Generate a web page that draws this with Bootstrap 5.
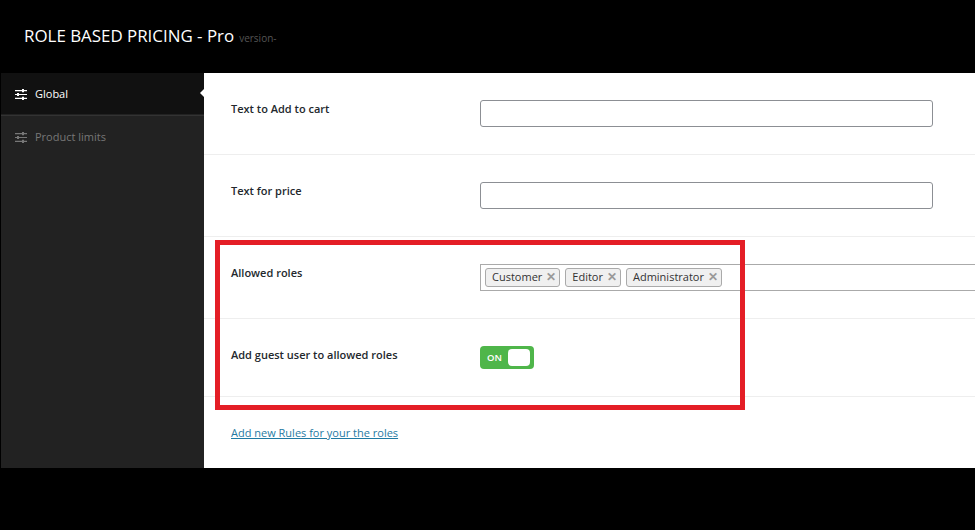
<!DOCTYPE html>
<html lang="en">
<head>
<meta charset="utf-8">
<title>Role Based Pricing</title>
<link href="https://cdn.jsdelivr.net/npm/bootstrap@5.3.0/dist/css/bootstrap.min.css" rel="stylesheet">
<style>
html,body{height:530px;overflow:hidden;background:#000;}
body{font-family:"Open Sans","Noto Sans",sans-serif;font-size:11px;color:#23282d;position:relative;}
.app-head{height:73px;padding:0 0 0 24px;color:#fff;background:#000;}
.app-title{font-size:16.9px;line-height:1;margin:0;font-weight:400;}
.app-ver{font-size:10px;color:#555;margin-left:5px;}
.app-body{height:395px;padding-left:1px;}
.side{width:203px;background:#222;flex:none;}
.side-item{height:41px;padding:2px 0 0 14px;gap:8px;color:#777;font-size:11px;border-top:1px solid #333;}
.side-item.on{height:41px;padding-top:1px;background:#111;color:#fff;border-top:0;position:relative;}
.side-item.on::after{content:"";position:absolute;right:0;top:16px;border:4px solid transparent;border-right-color:#fff;border-left:0;}
.side-item svg{width:12px;height:11px;flex:none;}
.side-gap{height:1px;}
.main{background:#fff;flex:1;min-width:0;overflow:hidden;}
.frow{height:82px;border-bottom:1px solid #eee;padding:28px 0 0 27px;}
.frow.short{height:78px;}
.flabel{width:249px;flex:none;font-weight:600;font-size:11px;line-height:16px;}
.ftext{width:453px;height:27px;margin-top:-1px;border:1px solid #8c8f94;border-radius:3px;background:#fff;}
.tagbox{width:520px;height:27px;margin-top:-1px;flex:none;border:1px solid #aaa;padding:3px 4px;gap:5px;}
.tagitem{height:19px;padding:0 3px 0 6px;border:1px solid #aaa;border-radius:3px;background:#f0f0f0;font-size:11px;line-height:16px;color:#333;white-space:nowrap;gap:4px;}
.tagx{font-weight:700;color:#999;font-size:12px;line-height:15px;}
.tog{width:54px;height:23px;margin-top:-1px;background:#4fb64a;border-radius:4px;padding:3px 4px 3px 7px;color:#fff;font-size:9.5px;font-weight:600;}
.tog-on{padding-top:2px;}
.tog-knob{width:22px;height:17px;background:#fff;border-radius:4px;}
.rule-link{padding:28px 0 0 27px;font-size:11px;}
.rule-link a{color:#1f7aa3;}
.callout{position:absolute;left:215px;top:240px;width:530px;height:170px;border:5px solid #e41e26;pointer-events:none;}
</style>
</head>
<body>
<header class="app-head d-flex align-items-center">
  <h1 class="app-title">ROLE BASED PRICING - Pro<span class="app-ver">version-</span></h1>
</header>
<div class="app-body d-flex">
  <nav class="side">
    <div class="side-item on d-flex align-items-center">
      <svg viewBox="0 0 12 11" aria-hidden="true"><path fill="currentColor" d="M0 1h7V0h2v1h3v1.200H9v1H7v-1H0zM0 4.900h2v-1h2v1h8v1.200H4v1H2v-1H0zM0 8.800h7v-1h2v1h3V10H9v1H7v-1H0z"/></svg>
      <span>Global</span>
    </div>
    <div class="side-gap"></div>
    <div class="side-item d-flex align-items-center">
      <svg viewBox="0 0 12 11" aria-hidden="true"><path fill="currentColor" d="M0 1h7V0h2v1h3v1.200H9v1H7v-1H0zM0 4.900h2v-1h2v1h8v1.200H4v1H2v-1H0zM0 8.800h7v-1h2v1h3V10H9v1H7v-1H0z"/></svg>
      <span>Product limits</span>
    </div>
  </nav>
  <main class="main">
    <div class="frow d-flex">
      <div class="flabel">Text to Add to cart</div>
      <div class="ftext"></div>
    </div>
    <div class="frow d-flex">
      <div class="flabel">Text for price</div>
      <div class="ftext"></div>
    </div>
    <div class="frow d-flex">
      <div class="flabel">Allowed roles</div>
      <div class="tagbox d-flex">
        <span class="tagitem d-flex">Customer <span class="tagx">✕</span></span>
        <span class="tagitem d-flex">Editor <span class="tagx">✕</span></span>
        <span class="tagitem d-flex">Administrator <span class="tagx">✕</span></span>
      </div>
    </div>
    <div class="frow short d-flex">
      <div class="flabel">Add guest user to allowed roles</div>
      <div class="tog d-flex align-items-center justify-content-between"><span class="tog-on">ON</span><span class="tog-knob"></span></div>
    </div>
    <div class="rule-link"><a href="#">Add new Rules for your the roles</a></div>
  </main>
</div>
<div class="callout"></div>
</body>
</html>
